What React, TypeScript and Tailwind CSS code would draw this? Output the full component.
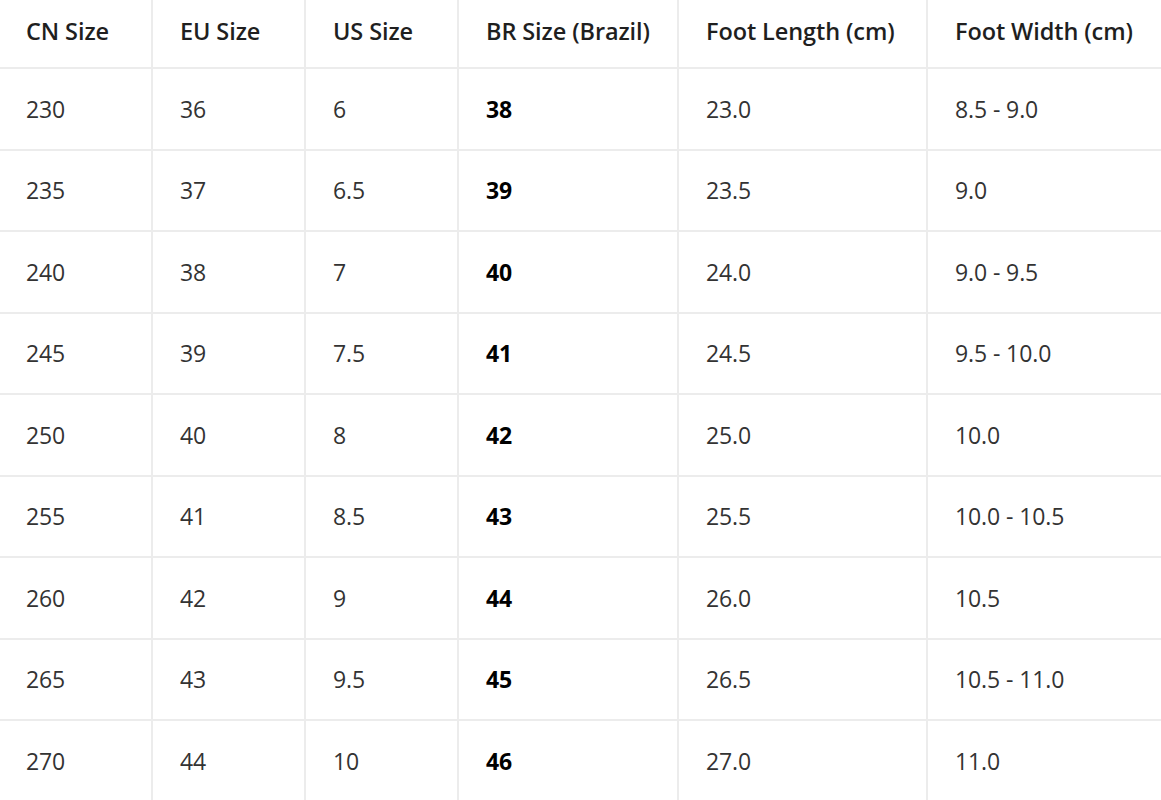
const headers = ['CN Size', 'EU Size', 'US Size', 'BR Size (Brazil)', 'Foot Length (cm)', 'Foot Width (cm)'];

const rows = [
  ['230', '36', '6', '38', '23.0', '8.5 - 9.0'],
  ['235', '37', '6.5', '39', '23.5', '9.0'],
  ['240', '38', '7', '40', '24.0', '9.0 - 9.5'],
  ['245', '39', '7.5', '41', '24.5', '9.5 - 10.0'],
  ['250', '40', '8', '42', '25.0', '10.0'],
  ['255', '41', '8.5', '43', '25.5', '10.0 - 10.5'],
  ['260', '42', '9', '44', '26.0', '10.5'],
  ['265', '43', '9.5', '45', '26.5', '10.5 - 11.0'],
  ['270', '44', '10', '46', '27.0', '11.0'],
];

const widths = ['w-[152px]', 'w-[153px]', 'w-[153px]', 'w-[220px]', 'w-[249px]', 'w-[234px]'];

export default function App() {
  return (
    <div className="min-h-screen bg-white font-['Open_Sans',sans-serif] overflow-hidden">
      <table className="w-[1161px] table-fixed border-collapse text-[23px]">
        <colgroup>
          {widths.map((w, i) => (
            <col key={i} className={w} />
          ))}
        </colgroup>
        <thead>
          <tr className="h-[68px]">
            {headers.map((h, i) => (
              <th
                key={h}
                className={`pl-[27px] first:pl-[26px] pb-[4px] text-left text-[23.5px] font-semibold text-[#1f1f1f] border-b-2 border-[#ececec] ${i < 5 ? 'border-r-2' : ''} whitespace-nowrap tracking-[-0.1px]`}
              >
                {h}
              </th>
            ))}
          </tr>
        </thead>
        <tbody>
          {rows.map((r, ri) => (
            <tr key={ri} className="h-[81.5px]">
              {r.map((c, i) => (
                <td
                  key={i}
                  className={`pl-[27px] first:pl-[26px] text-left border-b-2 border-[#ececec] ${i < 5 ? 'border-r-2' : ''} ${i === 3 ? 'font-bold text-black' : 'text-[#333333]'} tracking-[-0.1px]`}
                >
                  {c}
                </td>
              ))}
            </tr>
          ))}
        </tbody>
      </table>
    </div>
  );
}
